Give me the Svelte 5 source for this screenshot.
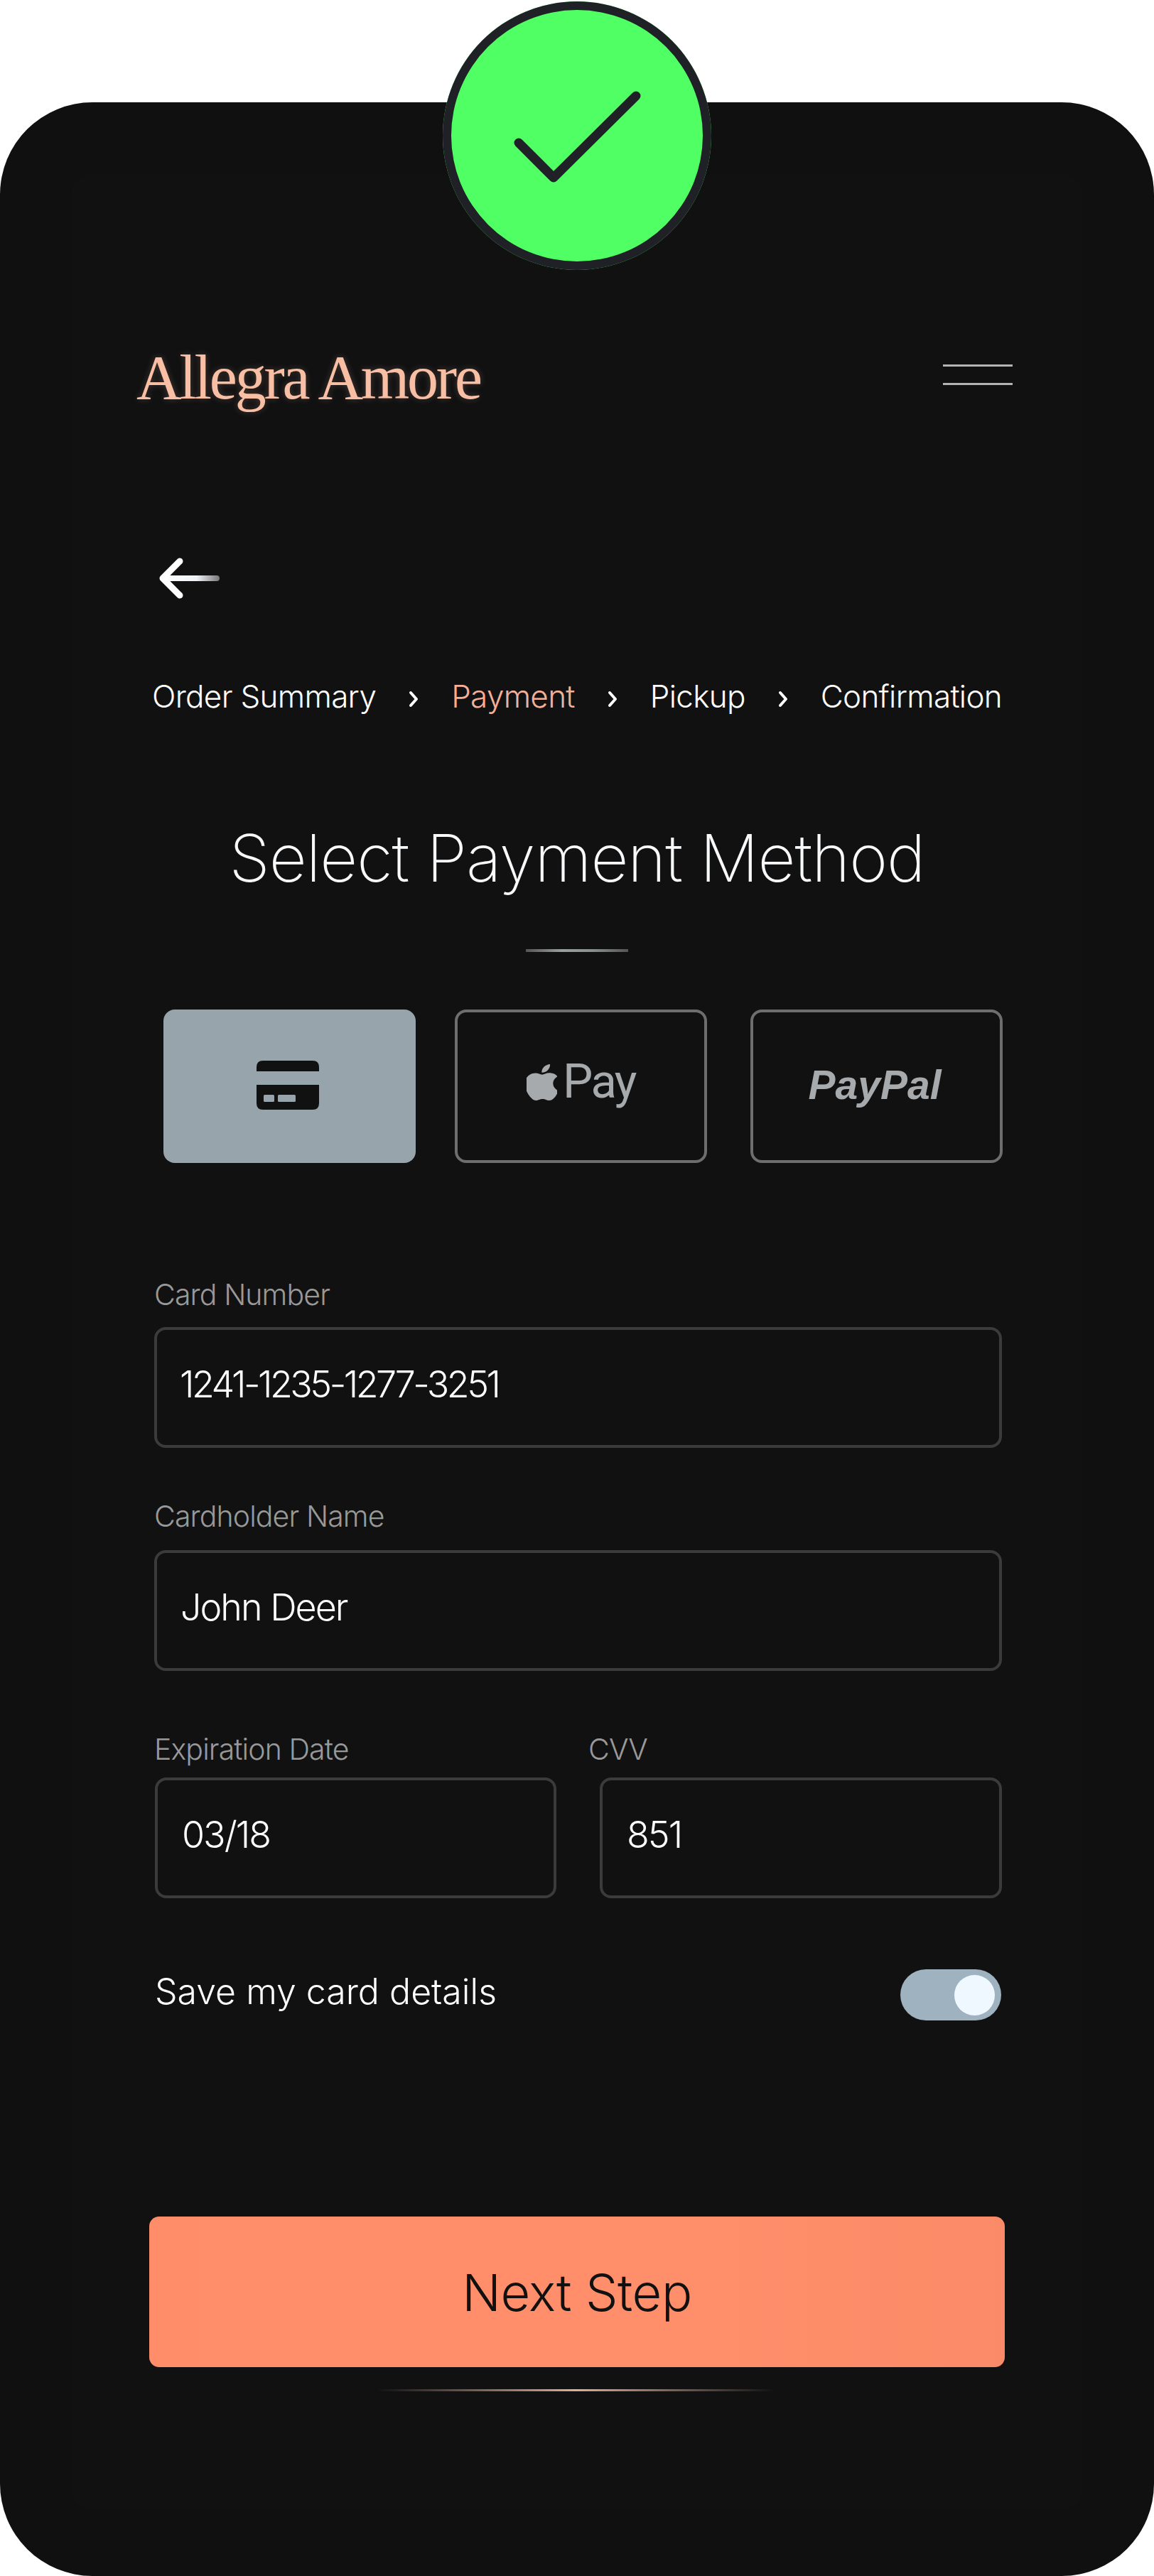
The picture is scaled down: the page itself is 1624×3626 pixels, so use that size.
<script>
  const steps = ['Order Summary', 'Payment', 'Pickup', 'Confirmation'];
</script>

<div class="screen">
  <div class="badge">
    <svg width="378" height="378" viewBox="0 0 378 378" aria-hidden="true">
      <path class="tick" d="M107 199 L156 248 L272 133" />
    </svg>
  </div>
  <main class="panel">
    <div class="inner">
      <header class="top">
        <div class="logo">Allegra Amore</div>
        <div class="burger"><span></span><span></span></div>
      </header>

      <svg class="back" width="90" height="60" viewBox="0 0 90 60" aria-hidden="true">
        <defs>
          <linearGradient id="shaft" gradientUnits="userSpaceOnUse" x1="7" x2="87" y1="0" y2="0">
            <stop offset="0" stop-color="#fff" />
            <stop offset="0.6" stop-color="#eef1f6" />
            <stop offset="1" stop-color="#777" />
          </linearGradient>
        </defs>
        <path d="M8 29 H83" stroke="url(#shaft)" stroke-width="8" stroke-linecap="round" fill="none" />
        <path d="M31 5 L7 29 L31 53" stroke="#fff" stroke-width="9" stroke-linecap="round" stroke-linejoin="round" fill="none" />
      </svg>

      <nav class="crumbs">
        {#each steps as step, i}
          {#if i > 0}
            <svg class="chev" width="14" height="24" viewBox="0 0 14 24" aria-hidden="true">
              <path d="M3 3 L11 12 L3 21" />
            </svg>
          {/if}
          <span class:active={step === 'Payment'}>{step}</span>
        {/each}
      </nav>

      <h1>Select Payment Method</h1>
      <div class="rule"></div>

      <div class="methods">
        <button class="method on" aria-label="Card">
          <svg width="88" height="69" viewBox="0 0 88 69" aria-hidden="true">
            <path d="M0 15 V9 Q0 0 9 0 H79 Q88 0 88 9 V15 Z" fill="#111" />
            <path d="M0 34 H88 V60 Q88 69 79 69 H9 Q0 69 0 60 Z" fill="#111" />
            <rect x="10" y="48" width="15" height="10" rx="1.5" fill="#97a4ab" />
            <rect x="30" y="48" width="25" height="10" rx="1.5" fill="#97a4ab" />
          </svg>
        </button>
        <button class="method apple">
          <svg width="43" height="51" viewBox="3.1 0 17.8 24" preserveAspectRatio="none" aria-hidden="true">
            <path fill="#a6aaac" d="M12.152 6.896c-.948 0-2.415-1.078-3.96-1.04-2.04.027-3.91 1.183-4.961 3.014-2.117 3.675-.546 9.103 1.519 12.09 1.013 1.454 2.208 3.09 3.792 3.039 1.52-.065 2.09-.987 3.935-.987 1.831 0 2.35.987 3.96.948 1.637-.026 2.676-1.48 3.676-2.948 1.156-1.688 1.636-3.325 1.662-3.415-.039-.013-3.182-1.221-3.22-4.857-.026-3.04 2.48-4.494 2.597-4.559-1.429-2.09-3.623-2.324-4.39-2.376-2-.156-3.675 1.09-4.61 1.09zM15.53 3.83c.843-1.012 1.4-2.427 1.245-3.83-1.207.052-2.662.805-3.532 1.818-.78.896-1.454 2.338-1.273 3.714 1.338.104 2.715-.688 3.559-1.701" />
          </svg>
          <span class="paytext">Pay</span>
        </button>
        <button class="method paypal"><span class="pp">PayPal</span></button>
      </div>

      <div class="form">
        <label class="first">
          <span class="lab">Card Number</span>
          <span class="box num">1241-1235-1277-3251</span>
        </label>
        <label class="second">
          <span class="lab">Cardholder Name</span>
          <span class="box">John Deer</span>
        </label>
        <div class="pair">
          <label>
            <span class="lab">Expiration Date</span>
            <span class="box">03/18</span>
          </label>
          <label class="cvv">
            <span class="lab">CVV</span>
            <span class="box">851</span>
          </label>
        </div>
        <div class="save">
          <span>Save my card details</span>
          <div class="toggle"><div class="knob"></div></div>
        </div>
      </div>

      <button class="next">Next Step</button>
      <div class="glow"></div>
    </div>
  </main>
</div>

<style>
  :global(body) {
    margin: 0;
    background: #fff;
  }
  .screen {
    position: relative;
    width: 1624px;
    height: 3626px;
    padding-top: 144px;
    box-sizing: border-box;
    background: #fff;
    overflow: hidden;
    font-family: Inter, "Noto Sans", sans-serif;
    font-weight: 300;
    color: #fff;
  }
  .badge {
    position: absolute;
    left: 623px;
    top: 2px;
    width: 378px;
    height: 378px;
    box-sizing: border-box;
    border-radius: 50%;
    background: #4fff63;
    box-shadow: inset 0 0 0 12px #1f2126;
    z-index: 2;
  }
  .badge svg {
    display: block;
  }
  .tick {
    fill: none;
    stroke: #1f2126;
    stroke-width: 13;
    stroke-linecap: round;
    stroke-linejoin: round;
  }
  .panel {
    height: 3482px;
    padding: 101px 100px 93px;
    box-sizing: border-box;
    background: #101010;
    border-radius: 130px;
  }
  .inner {
    height: 3288px;
    background: #111112;
    border-radius: 30px;
  }
  .top {
    display: flex;
    justify-content: space-between;
    padding: 243px 99px 0 92px;
  }
  .logo {
    font-family: "Liberation Serif", serif;
    font-weight: 400;
    font-size: 88px;
    line-height: 88px;
    letter-spacing: -3.2px;
    color: #f9bfa5;
    text-shadow: 0 0 10px rgba(249, 191, 165, 0.25);
  }
  .burger {
    display: flex;
    flex-direction: column;
    gap: 23px;
    width: 98px;
    margin-top: 25px;
  }
  .burger span {
    height: 3px;
    background: #b4b4b4;
  }
  .back {
    display: block;
    margin: 209px 0 0 122px;
  }
  .crumbs {
    display: flex;
    justify-content: space-between;
    align-items: center;
    width: 1196px;
    margin: 110px 0 0 114px;
    font-size: 44px;
    font-weight: 260;
    line-height: 50px;
    letter-spacing: -0.7px;
  }
  .crumbs .active {
    color: #f3b097;
  }
  .chev {
    margin-top: 8px;
  }
  .chev path {
    fill: none;
    stroke: #fff;
    stroke-width: 4;
    stroke-linecap: round;
    stroke-linejoin: round;
  }
  h1 {
    margin: 148px 0 0;
    font-size: 92px;
    line-height: 110px;
    font-weight: 200;
    letter-spacing: -1px;
    text-align: center;
    color: #f8f9fa;
  }
  .rule {
    width: 144px;
    height: 4px;
    margin: 73px 0 0 640px;
    background: linear-gradient(90deg, #555 0%, #9a9f9f 35%, #8a9090 65%, #555 100%);
  }
  .methods {
    display: flex;
    margin: 81px 0 0 130px;
  }
  .method {
    display: flex;
    align-items: center;
    justify-content: center;
    width: 355px;
    height: 216px;
    padding: 0 0 4px;
    box-sizing: border-box;
    background: none;
    border: 4px solid #6e6e6e;
    border-radius: 16px;
    font: inherit;
  }
  .method.on {
    background: #97a4ab;
    border: none;
    padding: 0 5px 4px 0;
  }
  .apple {
    gap: 8px;
    margin-left: 55px;
    padding-bottom: 12px;
  }
  .paytext {
    font-family: Roboto, "Liberation Sans", sans-serif;
    font-weight: 400;
    font-size: 67px;
    line-height: 67px;
    letter-spacing: -2.5px;
    color: #a6aaac;
    margin-top: -2px;
  }
  .paypal {
    margin-left: 61px;
    padding: 0 5px 4px 0;
  }
  .pp {
    font-family: "Liberation Sans", sans-serif;
    font-weight: 700;
    font-style: italic;
    font-size: 57px;
    line-height: 57px;
    color: #a6aaac;
  }
  .form {
    width: 1193px;
    margin: 163px 0 0 117px;
  }
  label {
    display: block;
  }
  .lab {
    display: block;
    font-size: 41px;
    font-weight: 260;
    line-height: 44px;
    letter-spacing: -0.9px;
    color: #999;
  }
  .box {
    display: flex;
    align-items: center;
    height: 170px;
    margin-top: 24px;
    padding: 0 0 10px 34px;
    box-sizing: border-box;
    border: 4px solid #3a3b3c;
    border-radius: 16px;
    font-size: 52px;
    letter-spacing: -2px;
    color: #fff;
  }
  .box.num {
    letter-spacing: -3.5px;
    padding-left: 32px;
  }
  .second {
    margin-top: 74px;
  }
  .second .box {
    margin-top: 26px;
    padding-left: 33px;
  }
  .pair {
    display: grid;
    grid-template-columns: 565px 566px;
    justify-content: space-between;
    margin: 88px 0 0 1px;
  }
  .pair .box {
    margin-top: 18px;
  }
  .pair .lab {
    margin-left: -1px;
  }
  .cvv .lab {
    margin-left: -16px;
  }
  .save {
    display: flex;
    justify-content: space-between;
    align-items: flex-start;
    margin-top: 100px;
    padding-left: 1px;
    font-size: 50px;
    line-height: 62px;
  }
  .toggle {
    display: flex;
    align-items: center;
    justify-content: flex-end;
    width: 142px;
    height: 72px;
    padding-right: 9px;
    box-sizing: border-box;
    border-radius: 36px;
    background: #9fb2bf;
    margin-right: 1px;
  }
  .knob {
    width: 57px;
    height: 57px;
    border-radius: 50%;
    background: #f0f8ff;
  }
  .next {
    display: block;
    width: 1204px;
    height: 212px;
    margin: 276px 0 0 110px;
    padding: 0;
    border: none;
    border-radius: 14px;
    background: linear-gradient(90deg, #ff8d69 0%, #ff8e6b 60%, #fb8b68 100%);
    font-family: Inter, sans-serif;
    font-weight: 350;
    font-size: 72px;
    letter-spacing: -0.4px;
    color: #111;
  }
  .glow {
    width: 559px;
    height: 3px;
    margin: 31px 0 0 431px;
    background: linear-gradient(90deg, transparent 0%, #e0ae96 50%, transparent 100%);
  }
</style>
